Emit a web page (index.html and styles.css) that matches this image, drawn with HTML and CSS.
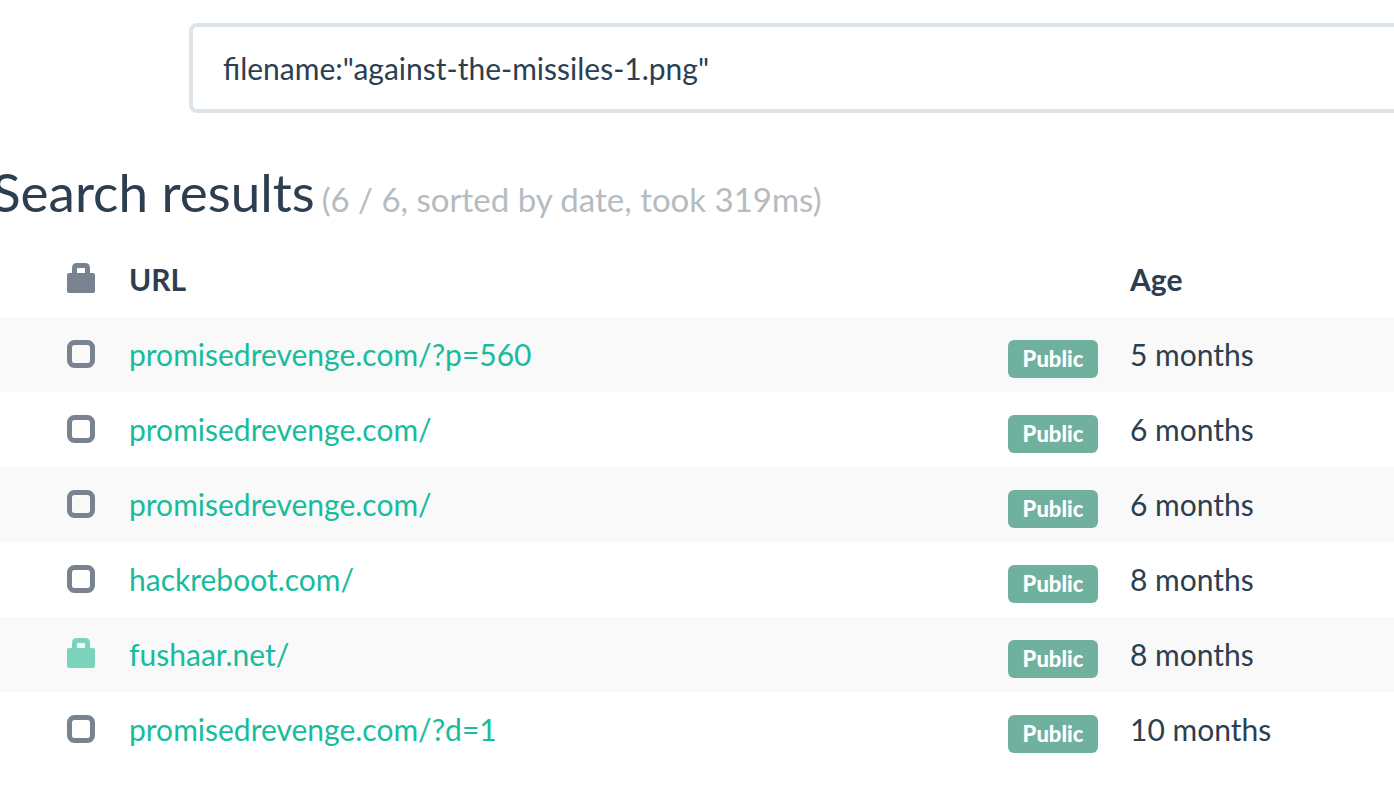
FILE: index.html
```html
<!DOCTYPE html>
<html lang="en">
<head>
<meta charset="utf-8">
<title>Search results</title>
<link rel="stylesheet" href="styles.css">
</head>
<body>
<svg class="sprite" aria-hidden="true">
<symbol id="bag" viewBox="0 0 28 30"><path fill-rule="evenodd" d="M5 10V5Q5 0 10 0H18Q23 0 23 5V10H26Q28 10 28 12V28Q28 30 26 30H2Q0 30 0 28V12Q0 10 2 10ZM10 10H18V6Q18 5 17 5H11Q10 5 10 6Z"/></symbol>
<symbol id="box" viewBox="0 0 28 28"><rect x="2.500" y="2.500" width="23" height="23" rx="5" fill="none" stroke="currentColor" stroke-width="5"/></symbol>
</svg>
<form class="search"><input class="search-input" type="text" aria-label="Search" value='filename:"against-the-missiles-1.png"'></form>
<main>
<h1 class="title">Search results <small class="summary">(6 / 6, sorted by date, took 319ms)</small></h1>
<table class="results">
<thead><tr><th class="state"><svg class="icon bag"><use href="#bag"/></svg></th><th class="url">URL</th><th class="visibility"></th><th class="age">Age</th></tr></thead>
<tbody>
<tr><td class="state"><svg class="icon"><use href="#box"/></svg></td><td><a href="#">promisedrevenge.com/?p=560</a></td><td><span class="label">Public</span></td><td>5 months</td></tr>
<tr><td class="state"><svg class="icon"><use href="#box"/></svg></td><td><a href="#">promisedrevenge.com/</a></td><td><span class="label">Public</span></td><td>6 months</td></tr>
<tr><td class="state"><svg class="icon"><use href="#box"/></svg></td><td><a href="#">promisedrevenge.com/</a></td><td><span class="label">Public</span></td><td>6 months</td></tr>
<tr><td class="state"><svg class="icon"><use href="#box"/></svg></td><td><a href="#">hackreboot.com/</a></td><td><span class="label">Public</span></td><td>8 months</td></tr>
<tr><td class="state"><svg class="icon bag secure"><use href="#bag"/></svg></td><td><a href="#">fushaar.net/</a></td><td><span class="label">Public</span></td><td>8 months</td></tr>
<tr><td class="state"><svg class="icon"><use href="#box"/></svg></td><td><a href="#">promisedrevenge.com/?d=1</a></td><td><span class="label">Public</span></td><td>10 months</td></tr>
</tbody>
</table>
</main>
</body>
</html>
```

FILE: styles.css
```css
* { box-sizing: border-box; }
body { margin: 0; overflow-x: hidden; background: #fff; color: #2c3e50; font: 30px/43px Lato, sans-serif; }
.sprite { display: none; }
.search { padding: 23px 0 0 189px; }
.search-input { display: block; width: calc(100% + 16px); height: 90px; padding: 0 30px; border: 4px solid #dce4ec; border-radius: 8px; background: #fff; color: #2c3e50; font: inherit; outline: 0; }
.title { display: flex; align-items: baseline; gap: 7px; margin: 49px 0 13px -8px; font-size: 53px; line-height: 60px; font-weight: 400; white-space: nowrap; }
.summary { color: #b4bcc2; font-size: 33px; }
.results { width: 100%; border-collapse: collapse; table-layout: fixed; }
.results th, .results td { height: 75px; padding: 0; text-align: left; vertical-align: middle; white-space: nowrap; }
.results .state { width: 129px; padding: 0 0 2px 67px; }
.visibility { width: 122px; }
.age { width: 264px; }
.results tbody tr:nth-child(odd) { background: #f9f9f9; }
.results a { color: #18bc9c; text-decoration: none; }
.icon { display: block; width: 28px; height: 28px; color: #78838f; fill: currentColor; }
.bag { height: 30px; margin-bottom: 2px; }
.secure { color: #7bd3bd; }
.label { display: block; width: 90px; height: 38px; margin-top: 8px; border-radius: 6px; background: #6fb09f; color: #fff; font-size: 22px; font-weight: 900; line-height: 38px; text-align: center; }
```
